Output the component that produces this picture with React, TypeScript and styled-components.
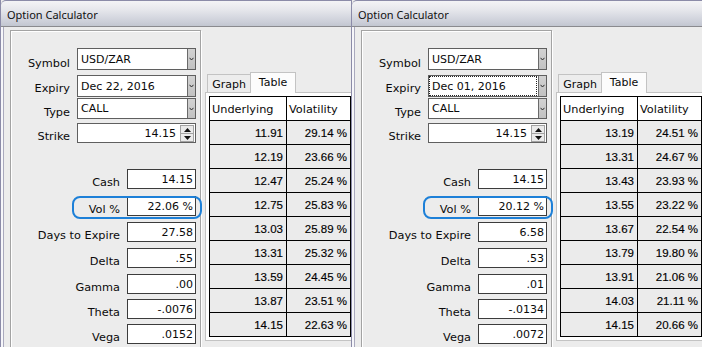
import React from 'react';
import styled, { createGlobalStyle, css } from 'styled-components';

interface CalcData {
  expiry: string;
  expiryFocused?: boolean;
  cash: string;
  vol: string;
  days: string;
  delta: string;
  gamma: string;
  theta: string;
  vega: string;
  rows: [string, string][];
}

const calcs: CalcData[] = [
  {
    expiry: 'Dec 22, 2016',
    cash: '14.15',
    vol: '22.06 %',
    days: '27.58',
    delta: '.55',
    gamma: '.00',
    theta: '-.0076',
    vega: '.0152',
    rows: [
      ['11.91', '29.14 %'],
      ['12.19', '23.66 %'],
      ['12.47', '25.24 %'],
      ['12.75', '25.83 %'],
      ['13.03', '25.89 %'],
      ['13.31', '25.32 %'],
      ['13.59', '24.45 %'],
      ['13.87', '23.51 %'],
      ['14.15', '22.63 %'],
    ],
  },
  {
    expiry: 'Dec 01, 2016',
    expiryFocused: true,
    cash: '14.15',
    vol: '20.12 %',
    days: '6.58',
    delta: '.53',
    gamma: '.01',
    theta: '-.0134',
    vega: '.0072',
    rows: [
      ['13.19', '24.51 %'],
      ['13.31', '24.67 %'],
      ['13.43', '23.93 %'],
      ['13.55', '23.22 %'],
      ['13.67', '22.54 %'],
      ['13.79', '19.80 %'],
      ['13.91', '21.06 %'],
      ['14.03', '21.11 %'],
      ['14.15', '20.66 %'],
    ],
  },
];

const GlobalStyle = createGlobalStyle`
  html, body {
    margin: 0;
    padding: 0;
    background: #ececec;
  }
  body {
    width: 702px;
    height: 347px;
    overflow: hidden;
  }
`;

const uiFont = css`
  font-family: "DejaVu Sans", Verdana, sans-serif;
  color: #0a0a0a;
`;

const Desktop = styled.div`
  display: flex;
  width: 702px;
  height: 347px;
  overflow: hidden;
`;

const Window = styled.div`
  flex: none;
  width: 351px;
  height: 347px;
  box-sizing: border-box;
  overflow: hidden;
  display: flex;
  flex-direction: column;
  background: #ececec;
  border-left: 1px solid #8b8ba8;
`;

const TitleBar = styled.div`
  flex: none;
  height: 27px;
  box-sizing: border-box;
  padding: 3px 0 0 6px;
  border-top: 1px solid #8b8ba8;
  border-bottom: 1px solid #8a8a8e;
  border-top-left-radius: 5px;
  background: linear-gradient(#f4f4f6 0%, #e6e7ec 35%, #cbced8 85%, #c2c6d0 100%);
  font-family: "Noto Sans", "Open Sans", sans-serif;
  font-size: 11px;
  line-height: 22px;
  color: #111;
`;

const Body = styled.div`
  flex: 1;
  display: flex;
  align-items: flex-start;
  gap: 4px;
  padding: 3px 0 0 9px;
  box-shadow: inset 2px 0 0 #f6f6fa, inset 3px 0 0 #a9a9bd;
`;

const GroupBox = styled.div`
  flex: none;
  width: 191px;
  height: 330px;
  box-sizing: border-box;
  padding-top: 17px;
  display: flex;
  flex-direction: column;
  border: 1px solid #a3a3a3;
  box-shadow: inset 1px 1px 0 #fff, 1px 1px 0 #fff;
`;

const FieldRow = styled.div<{ $lower?: boolean; $height: number; $gap: number; $ring?: boolean }>`
  position: relative;
  flex: none;
  display: grid;
  grid-template-columns: ${p => (p.$lower ? '109px 69px' : '59px 119px')};
  column-gap: 7px;
  height: ${p => p.$height}px;
  margin-top: ${p => p.$gap}px;

  ${p =>
    p.$ring &&
    css`
      &::after {
        content: '';
        position: absolute;
        left: 61px;
        right: -2px;
        top: 0px;
        bottom: -3px;
        border: 2.5px solid #1d80d8;
        border-radius: 8px;
        pointer-events: none;
      }
    `}
`;

const Label = styled.span<{ $lift?: number }>`
  ${uiFont};
  align-self: end;
  text-align: right;
  white-space: nowrap;
  font-size: 11.3px;
  line-height: 13px;
  padding-bottom: ${p => p.$lift ?? 0}px;
`;

const Combo = styled.div`
  display: flex;
  box-sizing: border-box;
  height: 100%;
  background: #fff;
  border: 1px solid #5f5f5f;
`;

const ComboText = styled.span<{ $focused?: boolean }>`
  ${uiFont};
  flex: 1;
  display: flex;
  align-items: center;
  padding-left: 3px;
  font-size: 11px;
  ${p =>
    p.$focused &&
    css`
      margin: 1px 2px 1px 1px;
      padding-left: 2px;
      outline: 1px dotted #222;
    `}
`;

const ComboButton = styled.span`
  flex: none;
  width: 7px;
  display: flex;
  align-items: center;
  justify-content: center;
  background: linear-gradient(#d2d2d2, #c2c2c2);
  border-left: 1px solid #6a6a6a;
`;

const Spin = styled.div`
  display: flex;
  box-sizing: border-box;
  height: 100%;
  background: #fff;
  border: 1px solid #5f5f5f;
`;

const SpinText = styled.span`
  ${uiFont};
  flex: 1;
  display: flex;
  align-items: center;
  justify-content: flex-end;
  padding-right: 4px;
  font-size: 11px;
`;

const SpinButtons = styled.span`
  flex: none;
  width: 14px;
  margin: 1px 1px 0 0;
  height: 17px;
  display: flex;
  flex-direction: column;
`;

const SpinButton = styled.span`
  flex: 1;
  display: flex;
  align-items: center;
  justify-content: center;
  background: #eaeaea;
  border: 1px solid #a2a2a2;
  & + & {
    border-top: none;
  }
`;

const ValueBox = styled.div`
  ${uiFont};
  box-sizing: border-box;
  height: 100%;
  display: flex;
  align-items: center;
  justify-content: flex-end;
  padding-right: 2px;
  background: #fff;
  border: 1px solid #3c3c3c;
  font-size: 11px;
`;

const TabControl = styled.div`
  flex: none;
  margin-top: 42px;
  display: flex;
  flex-direction: column;
`;

const TabStrip = styled.div`
  display: flex;
  align-items: flex-end;
  height: 20px;
  padding-left: 2px;
`;

const Tab = styled.div<{ $active?: boolean }>`
  ${uiFont};
  box-sizing: border-box;
  display: flex;
  align-items: center;
  justify-content: center;
  font-size: 11px;
  border: 1px solid #c3c3c3;
  border-bottom: none;
  ${p =>
    p.$active
      ? css`
          width: 46px;
          height: 21px;
          margin: 0 0 -1px -1px;
          padding-bottom: 2px;
          background: #fcfcfc;
          position: relative;
          z-index: 1;
        `
      : css`
          width: 44px;
          height: 18px;
          padding-top: 1px;
          background: #ededed;
        `}
`;

const TabPane = styled.div`
  padding: 3px;
  background: #fff;
  border: 1px solid #c3c3c3;
`;

const Grid = styled.div`
  display: grid;
  grid-template-columns: 77px 64px;
  grid-auto-rows: 24px;
  border-top: 1px solid #000;
  border-left: 1px solid #000;
`;

const HeadCell = styled.div`
  ${uiFont};
  box-sizing: border-box;
  display: flex;
  align-items: center;
  padding: 1px 0 0 2px;
  background: #fff;
  font-size: 11.3px;
  border-right: 1px solid #000;
  border-bottom: 1px solid #000;
`;

const DataCell = styled.div`
  box-sizing: border-box;
  display: flex;
  align-items: center;
  justify-content: flex-end;
  padding: 1px 3px 0 0;
  background: #ebebeb;
  font-family: "Liberation Sans", Arial, sans-serif;
  font-size: 11.5px;
  color: #000;
  -webkit-text-stroke: 0.15px #000;
  border-right: 1px solid #000;
  border-bottom: 1px solid #000;
`;

const Chevron = () => (
  <svg width="5" height="4" viewBox="0 0 5 4">
    <path d="M0.5 0.8 L2.5 3 L4.5 0.8" fill="none" stroke="#2a2a2a" strokeWidth="1" />
  </svg>
);

const Arrow = ({ up }: { up?: boolean }) => (
  <svg width="7" height="4" viewBox="0 0 7 4">
    <path d={up ? 'M0 4 L3.5 0 L7 4 Z' : 'M0 0 L3.5 4 L7 0 Z'} fill="#111" />
  </svg>
);

const ComboField = ({ value, focused }: { value: string; focused?: boolean }) => (
  <Combo>
    <ComboText $focused={focused}>{value}</ComboText>
    <ComboButton>
      <Chevron />
    </ComboButton>
  </Combo>
);

const Calculator = ({ data }: { data: CalcData }) => {
  const values: [string, string, number][] = [
    ['Vol %', data.vol, 7],
    ['Days to Expire', data.days, 6],
    ['Delta', data.delta, 6],
    ['Gamma', data.gamma, 6],
    ['Theta', data.theta, 5],
    ['Vega', data.vega, 5],
  ];

  return (
    <Window>
      <TitleBar>Option Calculator</TitleBar>
      <Body>
        <GroupBox>
          <FieldRow $height={22} $gap={0}>
            <Label>Symbol</Label>
            <ComboField value="USD/ZAR" />
          </FieldRow>
          <FieldRow $height={22} $gap={5}>
            <Label $lift={2}>Expiry</Label>
            <ComboField value={data.expiry} focused={data.expiryFocused} />
          </FieldRow>
          <FieldRow $height={21} $gap={1}>
            <Label>Type</Label>
            <ComboField value="CALL" />
          </FieldRow>
          <FieldRow $height={20} $gap={4}>
            <Label>Strike</Label>
            <Spin>
              <SpinText>14.15</SpinText>
              <SpinButtons>
                <SpinButton>
                  <Arrow up />
                </SpinButton>
                <SpinButton>
                  <Arrow />
                </SpinButton>
              </SpinButtons>
            </Spin>
          </FieldRow>

          <FieldRow $lower $height={20} $gap={26}>
            <Label>Cash</Label>
            <ValueBox>{data.cash}</ValueBox>
          </FieldRow>
          {values.map(([label, value, gap]) => (
            <FieldRow key={label} $lower $height={20} $gap={gap} $ring={label === 'Vol %'}>
              <Label>{label}</Label>
              <ValueBox>{value}</ValueBox>
            </FieldRow>
          ))}
        </GroupBox>

        <TabControl>
          <TabStrip>
            <Tab>Graph</Tab>
            <Tab $active>Table</Tab>
          </TabStrip>
          <TabPane>
            <Grid>
              <HeadCell>Underlying</HeadCell>
              <HeadCell>Volatility</HeadCell>
              {data.rows.map(([underlying, vol]) => (
                <React.Fragment key={underlying}>
                  <DataCell>{underlying}</DataCell>
                  <DataCell>{vol}</DataCell>
                </React.Fragment>
              ))}
            </Grid>
          </TabPane>
        </TabControl>
      </Body>
    </Window>
  );
};

export default function App() {
  return (
    <>
      <GlobalStyle />
      <Desktop>
        {calcs.map((c, i) => (
          <Calculator key={i} data={c} />
        ))}
      </Desktop>
    </>
  );
}
